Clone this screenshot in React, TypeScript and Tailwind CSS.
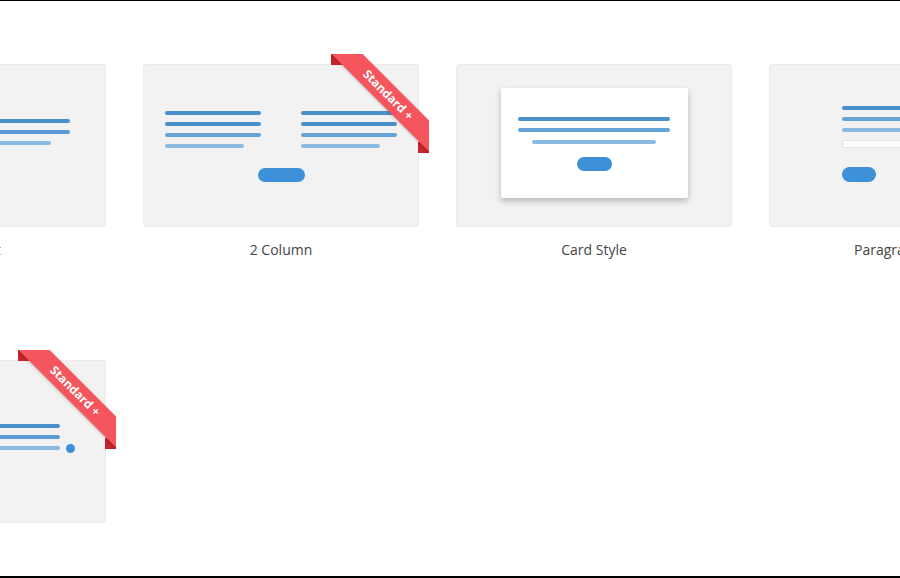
import React from "react";

function Ribbon() {
    return (
        <div className="pointer-events-none absolute -top-[11px] -right-[11px] h-[99px] w-[98px] overflow-hidden">
            <div className="absolute left-0 top-0 h-[11px] w-[11px] bg-[#c8242c]"/>
            <div className="absolute bottom-0 right-0 h-[11px] w-[11px] bg-[#c8242c]"/>
            <div
                className="absolute left-[-18px] top-[30px] flex h-[22px] w-[150px] rotate-45 items-center justify-center bg-[#f5555c] text-[12px] font-bold text-white shadow-[0_1px_3px_rgba(0,0,0,0.2)]">
                Standard +
            </div>
        </div>
    )
}

function Line({w, c}: { w: string, c: string }) {
    return <div className={`h-[4px] rounded-full ${w} ${c}`}/>
}

function Tile({label, ribbon, children}: { label: string, ribbon?: boolean, children: React.ReactNode }) {
    return (
        <div className="flex flex-col items-center">
            <div className="relative h-[163px] w-full rounded-[3px] border border-[#ebebeb] bg-[#f2f2f2]">
                {children}
                {ribbon && <Ribbon/>}
            </div>
            <p className="mt-[13px] text-[14px] leading-5 text-[#444]">{label}</p>
        </div>
    )
}

export default function App() {
    return (
        <div
            className="h-[578px] w-[900px] overflow-hidden border-t border-b-2 border-black bg-white font-['Open_Sans',sans-serif]">
            <div className="ml-[-170px] grid grid-cols-[repeat(4,276px)] gap-x-[37px] gap-y-[100px] pt-[63px]">
                <Tile label="Basic Text">
                    <div className="flex flex-col items-end gap-[7px] pt-[54px] pr-[35px]">
                        <Line w="w-[204px]" c="bg-[#4a90cc]"/>
                        <Line w="w-[204px]" c="bg-[#5a9bd4]"/>
                        <div className="pr-[19px]"><Line w="w-[166px]" c="bg-[#8cbbe2]"/></div>
                    </div>
                </Tile>

                <Tile label="2 Column" ribbon>
                    <div className="flex flex-col pt-[46px]">
                        <div className="flex justify-between px-[21px]">
                            {[0, 1].map((i) => (
                                <div key={i} className="flex w-[96px] flex-col gap-[7px]">
                                    <Line w="w-full" c="bg-[#4a90cc]"/>
                                    <Line w="w-full" c="bg-[#4a90cc]"/>
                                    <Line w="w-full" c="bg-[#66a4d8]"/>
                                    <Line w="w-[79px]" c="bg-[#8cbbe2]"/>
                                </div>
                            ))}
                        </div>
                        <div className="mt-[20px] h-[14px] w-[47px] self-center rounded-full bg-[#3d91d8]"/>
                    </div>
                </Tile>

                <Tile label="Card Style">
                    <div className="flex justify-center pt-[23px]">
                        <div
                            className="flex h-[110px] w-[187px] flex-col items-center rounded-[2px] bg-white pt-[29px] shadow-[0_3px_6px_rgba(0,0,0,0.25)]">
                            <Line w="w-[152px]" c="bg-[#4a90cc]"/>
                            <div className="mt-[7px]"><Line w="w-[152px]" c="bg-[#66a4d8]"/></div>
                            <div className="mt-[8px]"><Line w="w-[124px]" c="bg-[#8cbbe2]"/></div>
                            <div className="mt-[13px] h-[14px] w-[35px] rounded-full bg-[#3d91d8]"/>
                        </div>
                    </div>
                </Tile>

                <Tile label="Paragraph Form">
                    <div className="flex flex-col gap-[7px] pl-[72px] pt-[41px]">
                        <Line w="w-[130px]" c="bg-[#4a90cc]"/>
                        <Line w="w-[130px]" c="bg-[#66a4d8]"/>
                        <Line w="w-[130px]" c="bg-[#8cbbe2]"/>
                        <div className="mt-[1px] h-[8px] w-[130px] rounded-[2px] border border-[#e4e4e4] bg-white"/>
                        <div className="mt-[12px] h-[15px] w-[34px] rounded-full bg-[#3d91d8]"/>
                    </div>
                </Tile>

                <Tile label="List" ribbon>
                    <div className="flex flex-col items-end gap-[7px] pt-[63px] pr-[45px]">
                        <Line w="w-[180px]" c="bg-[#4a90cc]"/>
                        <Line w="w-[180px]" c="bg-[#5a9bd4]"/>
                        <Line w="w-[180px]" c="bg-[#8cbbe2]"/>
                    </div>
                    <div className="absolute left-[235px] top-[83px] h-[9px] w-[9px] rounded-full bg-[#3d91d8]"/>
                </Tile>
            </div>
        </div>
    )
}
